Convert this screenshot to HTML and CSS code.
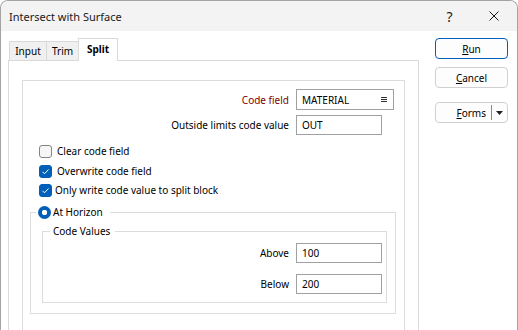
FILE: index.html
```html
<!DOCTYPE html>
<html>
<head>
<meta charset="utf-8">
<link rel="stylesheet" href="styles.css">
</head>
<body>
<div class="window">
  <div class="titlebar">
    <span class="title">Intersect with Surface</span>
    <div class="caption">
      <span class="cap-btn help">?</span>
      <span class="cap-btn close"><svg width="10" height="10" viewBox="0 0 10 10"><path d="M0.5 0.5 L9.5 9.5 M9.5 0.5 L0.5 9.5" stroke="#1a1a1a" stroke-width="1" fill="none"/></svg></span>
    </div>
  </div>
  <div class="body">
    <div class="tabs-col">
      <div class="tabstrip">
        <div class="tab t-input">Input</div>
        <div class="tab t-trim">Trim</div>
        <div class="tab t-split active">Split</div>
      </div>
      <div class="pane">
        <div class="group">
          <div class="field-row r1">
            <span class="lbl lbl-red">Code field</span>
            <div class="input combo"><span>MATERIAL</span><svg width="6" height="5" viewBox="0 0 6 5"><rect x="0" y="0" width="6" height="1" fill="#333"/><rect x="0" y="2" width="6" height="1" fill="#333"/><rect x="0" y="4" width="6" height="1" fill="#333"/></svg></div>
          </div>
          <div class="field-row r2">
            <span class="lbl">Outside limits code value</span>
            <div class="input">OUT</div>
          </div>
          <div class="check-row c1"><span class="cb"></span><span>Clear code field</span></div>
          <div class="check-row c2"><span class="cb on"><svg width="11" height="11" viewBox="0 0 11 11"><path d="M2.5 5.8 L4.5 7.8 L8.5 3.5" stroke="#fff" stroke-width="1" fill="none"/></svg></span><span>Overwrite code field</span></div>
          <div class="check-row c3"><span class="cb on"><svg width="11" height="11" viewBox="0 0 11 11"><path d="M2.5 5.8 L4.5 7.8 L8.5 3.5" stroke="#fff" stroke-width="1" fill="none"/></svg></span><span>Only write code value to split block</span></div>
          <fieldset class="horizon">
            <legend class="hz-legend"><span class="radio"></span><span class="rtext">At Horizon</span></legend>
            <fieldset class="codevals">
              <legend class="cv-legend">Code Values</legend>
              <div class="field-row cv1">
                <span class="lbl cv-lbl">Above</span>
                <div class="input">100</div>
              </div>
              <div class="field-row cv2">
                <span class="lbl cv-lbl">Below</span>
                <div class="input">200</div>
              </div>
            </fieldset>
          </fieldset>
        </div>
      </div>
    </div>
    <div class="buttons">
      <div class="btn run"><span><u>R</u>un</span></div>
      <div class="btn cancel"><span><u>C</u>ancel</span></div>
      <div class="btn forms">
        <span class="forms-main"><u>F</u>orms</span>
        <span class="forms-sep"></span>
        <span class="forms-arrow"><svg width="7" height="4" viewBox="0 0 7 4"><polygon points="0,0 7,0 3.5,4" fill="#222"/></svg></span>
      </div>
    </div>
  </div>
</div>
</body>
</html>
```

FILE: styles.css
```css
html, body {
  margin: 0;
  padding: 0;
  overflow: hidden;
  background: #ffffff;
}
body {
  width: 518px;
  height: 330px;
  font-family: "Noto Sans", "Open Sans", sans-serif;
  font-size: 10px;
  color: #000;
}
.window {
  width: 518px;
  height: 330px;
  box-sizing: border-box;
  border: 1px solid #a3a3a3;
  border-bottom: none;
  border-radius: 8px 8px 0 0;
  overflow: hidden;
  display: flex;
  flex-direction: column;
  background: #fff;
}
.titlebar {
  height: 30px;
  flex: none;
  background: #f3f3f3;
  display: flex;
  align-items: center;
  justify-content: space-between;
}
.title {
  padding-left: 8px;
  font-size: 11px;
  color: #1a1a1a;
}
.caption {
  display: flex;
  height: 30px;
}
.cap-btn {
  width: 46px;
  height: 30px;
  display: flex;
  align-items: center;
  justify-content: center;
}
.help {
  font-size: 14px;
  color: #1a1a1a;
  padding-left: 3px;
  box-sizing: border-box;
}
.body {
  flex: 1;
  display: flex;
  padding: 7px 0 0 7px;
  min-height: 0;
}
.tabs-col {
  width: 411px;
  display: flex;
  flex-direction: column;
}
.tabstrip {
  height: 22px;
  flex: none;
  display: flex;
  align-items: flex-end;
  padding-left: 1px;
}
.tab {
  height: 19px;
  box-sizing: border-box;
  border-top: 1px solid #d9d9d9;
  border-left: 1px solid #d9d9d9;
  background: #f0f0f0;
  display: flex;
  align-items: center;
  justify-content: center;
  padding-bottom: 1px;
}
.t-input { width: 37px; }
.t-trim { width: 32px; }
.t-split {
  width: 40px;
  height: 23px;
  border-right: 1px solid #d9d9d9;
  background: #fff;
  font-weight: bold;
  margin-bottom: -1px;
  position: relative;
  z-index: 1;
  padding-bottom: 3px;
}
.pane {
  flex: 1;
  box-sizing: border-box;
  border: 1px solid #d9d9d9;
  border-bottom: none;
  padding: 19px 13px 0 13px;
  background: #fff;
}
.group {
  border: 1px solid #dcdcdc;
  padding: 8px 0 60px 0;
}
.field-row {
  display: flex;
  align-items: center;
  height: 20px;
}
.r1 { height: 21px; }
.r2 { margin-top: 5px; }
.lbl {
  width: 266px;
  margin-right: 7px;
  text-align: right;
  white-space: nowrap;
}
.lbl-red { color: #800000; }
.input {
  box-sizing: border-box;
  width: 86px;
  height: 20px;
  border: 1px solid #a0a0a0;
  padding-left: 5px;
  display: flex;
  align-items: center;
  background: #fff;
}
.combo {
  width: 98px;
  height: 21px;
  justify-content: space-between;
  padding-right: 6px;
}
.check-row {
  display: flex;
  align-items: center;
  height: 16px;
  padding-left: 16px;
}
.c1 { margin-top: 8px; }
.c2 { margin-top: 4px; }
.c3 { margin-top: 3px; }
.cb {
  width: 13px;
  height: 13px;
  box-sizing: border-box;
  border: 1px solid #858585;
  border-radius: 3px;
  background: #f6f6f6;
  margin-right: 5px;
  display: flex;
  align-items: center;
  justify-content: center;
}
.c3 .cb { margin-right: 3px; }
.cb.on {
  background: #005fb8;
  border-color: #005fb8;
}
fieldset {
  min-width: 0;
  border: 1px solid #dcdcdc;
}
.horizon {
  margin: 6px 8px 0 7px;
  padding: 0 0 10px 0;
}
.hz-legend {
  margin-left: 5px;
  padding: 0 7px 0 2px;
  height: 16px;
  line-height: 16px;
  display: flex;
  align-items: center;
}
.radio {
  display: inline-block;
  width: 13px;
  height: 13px;
  border-radius: 50%;
  background: radial-gradient(circle, #fff 0 2.4px, #005fb8 3px);
  margin-right: 2px;
}
.codevals {
  margin: 3px 8px 0 11px;
  padding: 0 0 8px 0;
}
.cv-legend {
  margin-left: 7px;
  padding: 0 5px 0 3px;
  height: 16px;
  line-height: 16px;
}
.cv-lbl { width: 246px; }
.cv1 { margin-top: 4px; }
.cv2 { margin-top: 11px; }
.buttons {
  margin-left: 16px;
  display: flex;
  flex-direction: column;
}
.btn {
  width: 73px;
  height: 21px;
  box-sizing: border-box;
  border: 1px solid #d0d0d0;
  border-radius: 4px;
  background: #fdfdfd;
  display: flex;
  align-items: center;
  justify-content: center;
}
.run { border-color: #005fb8; }
.cancel { margin-top: 8px; }
.forms {
  margin-top: 14px;
  justify-content: flex-start;
}
.forms-main {
  flex: 1;
  text-align: right;
  padding-right: 5px;
}
.forms-sep {
  width: 1px;
  height: 15px;
  background: #8a8a8a;
}
.forms-arrow {
  width: 15px;
  display: flex;
  justify-content: center;
  align-items: center;
}
```
